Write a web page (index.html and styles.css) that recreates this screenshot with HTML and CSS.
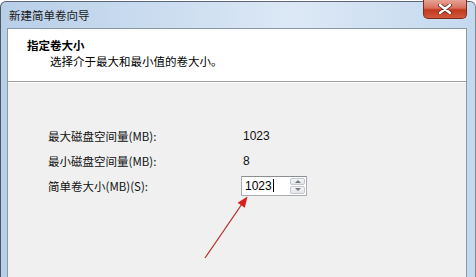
FILE: index.html
```html
<!DOCTYPE html>
<html lang="zh-CN">
<head>
  <meta charset="UTF-8">
  <title>新建简单卷向导</title>
  <link rel="stylesheet" href="styles.css">
</head>
<body>

  <div class="window">
    <div class="titlebar">
      <span class="title">新建简单卷向导</span>
      <div class="close-btn">
        <svg width="14" height="10" viewBox="0 0 14 10">
          <path d="M2 1 L12 9 M12 1 L2 9" stroke="#5a2a22" stroke-width="4" stroke-linecap="round"/>
          <path d="M2 1 L12 9 M12 1 L2 9" stroke="#ffffff" stroke-width="2.4" stroke-linecap="round"/>
        </svg>
      </div>
    </div>

    <div class="client">
      <div class="wizard-header">
        <div class="header-title">指定卷大小</div>
        <div class="header-sub">选择介于最大和最小值的卷大小。</div>
      </div>

      <div class="wizard-body">
        <div class="size-grid">
          <span class="label">最大磁盘空间量(MB):</span>
          <span class="value">1023</span>

          <span class="label">最小磁盘空间量(MB):</span>
          <span class="value">8</span>

          <span class="label">简单卷大小(MB)(S):</span>
          <div class="spin-box">
            <span class="spin-text">1023<span class="caret"></span></span>
            <div class="spin-buttons">
              <span class="spin-up"></span>
              <span class="spin-down"></span>
            </div>
          </div>
        </div>
      </div>
    </div>
  </div>

  <svg class="pointer-arrow" width="476" height="277" viewBox="0 0 476 277">
    <line x1="205" y1="258" x2="242" y2="204" stroke="#b8302c" stroke-width="1.3"/>
    <polygon points="247.5,196.5 244.8,207.8 237.6,202.8" fill="#d8201c"/>
  </svg>

</body>
</html>
```

FILE: styles.css
```css
body {
  margin: 0;
  width: 476px;
  height: 277px;
  overflow: hidden;
  background-color: #ffffff;
  font-family: "Noto Sans CJK SC", "DejaVu Sans", sans-serif;
  font-size: 11.5px;
  color: #111;
}

.window {
  margin-top: 1px;
  height: 276px;
  box-sizing: border-box;
  display: flex;
  flex-direction: column;
  border-left: 1px solid #4d5662;
  border-right: 1px solid #7b8898;
  border-top: 1px solid #5b6573;
  border-radius: 6px 6px 0 0;
  padding: 0 8px 0 6px;
  background: linear-gradient(to right, #b8cfe8 0%, #c9dbef 30%, #dce8f5 62%, #c4d8ee 100%);
}

.titlebar {
  height: 26px;
  display: flex;
  justify-content: space-between;
  align-items: flex-start;
  padding-left: 2px;
}

.title {
  line-height: 26px;
  font-size: 11.5px;
  color: #1a1a1a;
}

.close-btn {
  margin-top: -2px;
  width: 44px;
  height: 19px;
  box-sizing: border-box;
  border: 1px solid #7c2a20;
  border-top: none;
  border-radius: 0 0 5px 5px;
  background: linear-gradient(to bottom, #e6a394 0%, #d9705c 45%, #c2391f 55%, #d0583c 100%);
  display: flex;
  align-items: center;
  justify-content: center;
}

.client {
  flex: 1;
  display: flex;
  flex-direction: column;
  border: 1px solid #8898ab;
  border-bottom: none;
  background-color: #f0f0f0;
}

.wizard-header {
  height: 53px;
  box-sizing: border-box;
  background-color: #fff;
  border-bottom: 1px solid #a0a0a0;
  padding-top: 8px;
  line-height: 16px;
}

.header-title {
  font-weight: bold;
  padding-left: 19px;
  color: #000;
}

.header-sub {
  padding-left: 42px;
  color: #000;
}

.wizard-body {
  flex: 1;
  padding: 41px 0 0 40px;
  box-shadow: inset 0 1px 0 #ffffff;
}

.size-grid {
  display: grid;
  grid-template-columns: 195px auto;
  grid-auto-rows: 25px;
  align-items: center;
}

.label,
.value {
  color: #111;
}

.value {
  font-family: "Liberation Sans", Arial, sans-serif;
  font-size: 12px;
}

.spin-box {
  margin-left: -2px;
  width: 66px;
  height: 20px;
  box-sizing: border-box;
  display: flex;
  border: 1px solid #abadb3;
  border-top-color: #8a8d94;
  background-color: #fff;
}

.spin-text {
  flex: 1;
  padding-left: 3px;
  line-height: 18px;
  font-family: "Liberation Sans", Arial, sans-serif;
  font-size: 12px;
  color: #000;
  display: flex;
  align-items: center;
}

.caret {
  display: inline-block;
  width: 1px;
  height: 13px;
  margin-left: 1px;
  background-color: #000;
}

.spin-buttons {
  width: 15px;
  margin: 1px 1px 1px 0;
  display: flex;
  flex-direction: column;
  gap: 1px;
}

.spin-up,
.spin-down {
  flex: 1;
  border: 1px solid #c4c8ce;
  border-radius: 2px;
  background: linear-gradient(to bottom, #f6f6f6, #e3e5e8);
  display: flex;
  align-items: center;
  justify-content: center;
}

.spin-up::after {
  content: "";
  border-left: 3px solid transparent;
  border-right: 3px solid transparent;
  border-bottom: 3px solid #6f7a86;
}

.spin-down::after {
  content: "";
  border-left: 3px solid transparent;
  border-right: 3px solid transparent;
  border-top: 3px solid #6f7a86;
}

.pointer-arrow {
  position: absolute;
  left: 0;
  top: 0;
  pointer-events: none;
}
```
